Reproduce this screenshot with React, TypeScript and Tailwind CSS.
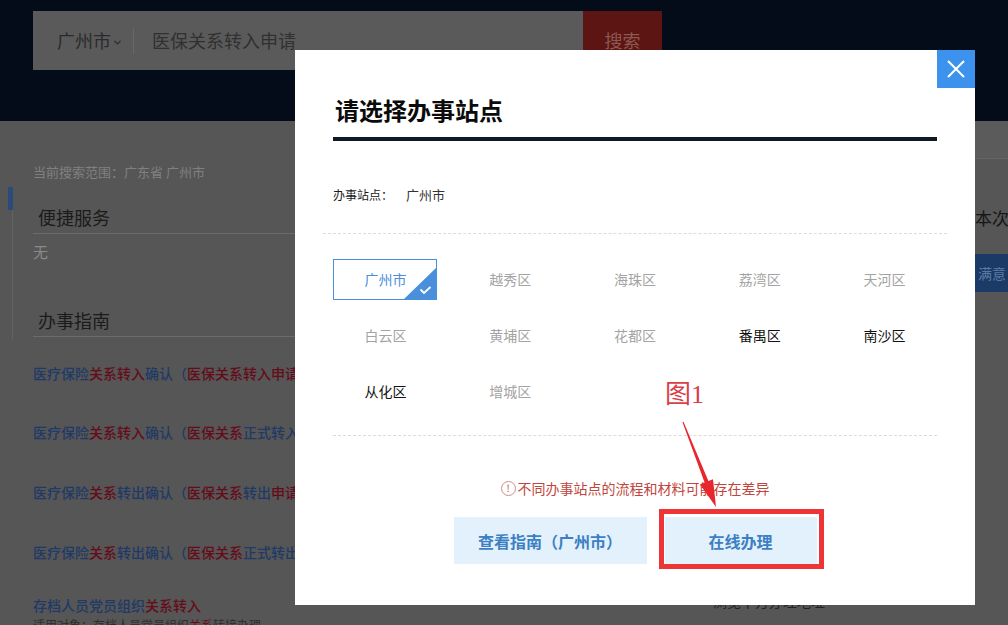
import React from 'react';
import { ChevronDown } from 'lucide-react';

const districts = [
  { name: '广州市', state: 'selected' },
  { name: '越秀区', state: 'off' },
  { name: '海珠区', state: 'off' },
  { name: '荔湾区', state: 'off' },
  { name: '天河区', state: 'off' },
  { name: '白云区', state: 'off' },
  { name: '黄埔区', state: 'off' },
  { name: '花都区', state: 'off' },
  { name: '番禺区', state: 'on' },
  { name: '南沙区', state: 'on' },
  { name: '从化区', state: 'on' },
  { name: '增城区', state: 'off' },
];

// [text, red?]
const guides: [string, boolean][][] = [
  [['医疗保险', false], ['关系转入', true], ['确认（', false], ['医保关系转入申请', true]],
  [['医疗保险', false], ['关系转入', true], ['确认（', false], ['医保关系', true], ['正式转入', false]],
  [['医疗保险', false], ['关系', true], ['转出确认（', false], ['医保关系', true], ['转出', false], ['申请', true]],
  [['医疗保险', false], ['关系', true], ['转出确认（', false], ['医保关系', true], ['正式转出', false]],
  [['存档人员党员组织', false], ['关系转入', true]],
];

const GuideLink = ({ parts, className }: { parts: [string, boolean][]; className: string }) => (
  <div className={`whitespace-nowrap text-[14px] font-medium leading-[20px] ${className}`}>
    {parts.map(([t, red], i) => (
      <span key={i} className={red ? 'text-[#650c1b]' : 'text-[#203a66]'}>
        {t}
      </span>
    ))}
  </div>
);

const District = ({ name, state }: { name: string; state: string }) => {
  if (state === 'selected') {
    return (
      <div className="relative flex h-[41px] w-[104px] items-center justify-center border border-[#4a8fdc] text-[14px] text-[#4a8fdc]">
        {name}
        <svg className="absolute bottom-0 right-0" width="32" height="31" viewBox="0 0 32 31">
          <polygon points="32,0 32,31 0,31" fill="#4a8fdc" />
          <path d="M16.5 21.5 L20 25 L26.5 19" fill="none" stroke="#fff" strokeWidth="1.8" />
        </svg>
      </div>
    );
  }
  return (
    <div
      className={`flex h-[41px] w-[104px] items-center justify-center text-[14px] ${
        state === 'on' ? 'text-[#111]' : 'text-[#a3a3a3]'
      }`}
    >
      {name}
    </div>
  );
};

export default function App() {
  return (
    <div className="relative h-[625px] w-[1008px] overflow-hidden bg-[#565656] font-['Noto_Sans_CJK_SC','Microsoft_YaHei',sans-serif]">
      {/* header */}
      <header className="h-[121px] bg-[#040c1a] pl-[33px] pt-[11px]">
        <div className="flex h-[59px] w-[629px]">
          <div className="flex w-[550px] items-center bg-[#5a5a5a]">
            <div className="flex items-center pl-[24px] text-[18px] text-[#2a2a2a]">
              广州市
              <ChevronDown size={11} strokeWidth={2.5} className="ml-[1px] mt-[3px]" />
            </div>
            <div className="ml-[10px] h-[26px] w-px bg-[#686868]" />
            <span className="ml-[18px] text-[18px] text-[#303030]">医保关系转入申请</span>
          </div>
          <div className="flex w-[79px] items-center justify-center bg-[#5c1512] text-[18px] text-[#8d5853]">
            搜索
          </div>
        </div>
      </header>

      {/* page body */}
      <div className="flex">
        <div className="ml-[8px] mt-[66px] flex w-[25px] shrink-0 flex-col">
          <div className="h-[23px] w-[5px] bg-[#2b4b7a]" />
          <div className="ml-[4px] h-[130px] w-px bg-[#636363]" />
        </div>
        <main className="w-[680px] shrink-0 pt-[41px]">
          <div className="text-[13px] leading-[20px] text-[#808080]">当前搜索范围：广东省 广州市</div>
          <div className="mt-[22px] border-b border-[#6b6b6b] pb-[3px] pl-[5px] text-[18px] leading-[26px] text-[#1b1b1b]">
            便捷服务
          </div>
          <div className="mt-[8px] text-[15px] leading-[20px] text-[#8a8a8a]">无</div>
          <div className="mt-[45px] border-b border-[#6b6b6b] pb-[3px] pl-[5px] text-[18px] leading-[26px] text-[#1b1b1b]">
            办事指南
          </div>
          <GuideLink parts={guides[0]} className="mt-[26px]" />
          <GuideLink parts={guides[1]} className="mt-[39px]" />
          <GuideLink parts={guides[2]} className="mt-[40px]" />
          <GuideLink parts={guides[3]} className="mt-[40px]" />
          <GuideLink parts={guides[4]} className="mt-[33px]" />
          <div className="mt-[2px] text-[12px] leading-[16px] text-[#2e2e2e]">
            适用对象：存档人员党员组织<span className="text-[#650c1b]">关系</span>转接办理
          </div>
        </main>
        <aside className="min-w-0 flex-1">
          <div className="h-[38px] border-b border-[#666] bg-[#5b5b5b]" />
          <div className="mt-[47px] whitespace-nowrap pl-[228px] text-[17px] leading-[24px] text-[#151515]">
            您对本次搜索结果满意吗？
          </div>
          <div className="ml-[237px] mt-[24px] flex h-[38px] w-[84px] items-center justify-center bg-[#1c3a66] text-[14px] text-[#5a7aa6]">
            满意
          </div>
          <div className="mt-[299px] whitespace-nowrap text-[14px] leading-[20px] text-[#222]">浏览下方办理地址</div>
        </aside>
      </div>

      {/* modal */}
      <div className="absolute left-[295px] top-[50px] flex h-[555px] w-[680px] flex-col bg-white">
        <button className="absolute right-0 top-0 flex h-[38px] w-[38px] items-center justify-center bg-[#3d92ee]">
          <svg width="18" height="18" viewBox="0 0 18 18">
            <path d="M1 1 L17 17 M17 1 L1 17" stroke="#fff" strokeWidth="2" />
          </svg>
        </button>
        <div className="px-[38px] pt-[44px]">
          <h2 className="pl-[2px] text-[24px] font-bold leading-[32px] text-[#0b0b0b]">请选择办事站点</h2>
          <div className="mt-[11px] h-[4px] bg-[#0f1a25]" />
        </div>
        <div className="mt-[44px] flex px-[38px] text-[12px] leading-[20px]">
          <span className="text-[#1a1a1a]">办事站点：</span>
          <span className="ml-[13px] text-[13px] text-[#333]">广州市</span>
        </div>
        <div className="mx-[28px] mt-[28px] border-t border-dashed border-[#dcdcdc]" />
        <div className="mx-[28px] mt-[25px] grid grid-cols-5 gap-y-[15px]">
          {districts.map(d => (
            <div key={d.name} className="flex justify-center">
              <District name={d.name} state={d.state} />
            </div>
          ))}
        </div>
        <div className="mx-[38px] mt-[23px] border-t border-dashed border-[#dcdcdc]" />
        <div className="mt-[42px] flex h-[20px] items-center justify-center text-[14px] text-[#c0463d]">
          <span className="mr-[2px] flex h-[15px] w-[15px] items-center justify-center rounded-full border border-[#c98f8f] text-[10px] leading-none text-[#c0463d]">
            !
          </span>
          不同办事站点的流程和材料可能存在差异
        </div>
        <div className="mt-[19px] flex justify-center gap-[18px]">
          <div className="flex h-[47px] w-[193px] items-center justify-center bg-[#e3f1fd] text-[16px] font-bold text-[#3c7fc3]">
            查看指南（广州市）
          </div>
          <div className="relative flex h-[47px] w-[152px] items-center justify-center bg-[#e3f1fd] text-[16px] font-bold text-[#3c7fc3]">
            在线办理
            <div className="absolute bottom-[-5px] left-[-6px] right-[-7px] top-[-8px] border-[5px] border-[#ee3535]" />
          </div>
        </div>
      </div>

      {/* annotation */}
      <div className="absolute left-[665px] top-[380px] font-['Liberation_Serif','Noto_Sans_CJK_SC',serif] text-[26px] leading-[30px] text-[#d8404a]">
        图1
      </div>
      <svg className="absolute left-[660px] top-[415px]" width="80" height="100" viewBox="0 0 80 100">
        <polygon
          points="22.5,7.2 44.6,67.5 40,69.4 56,92 53,64.2 48.4,66.1 23.5,6.8"
          fill="#e8262e"
        />
      </svg>
    </div>
  );
}
